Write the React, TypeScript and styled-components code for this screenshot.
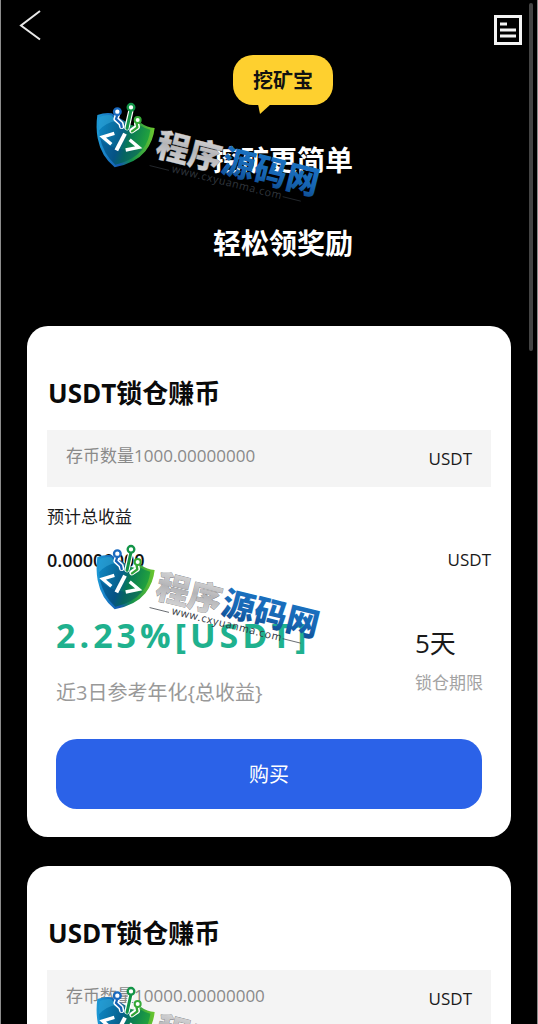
import React, { useId } from "react";
import styled, { createGlobalStyle } from "styled-components";

const GlobalStyle = createGlobalStyle`
  * { box-sizing: border-box; }
  body {
    margin: 0;
    background: #000;
    color: #1a1a1a;
    font-family: "Open Sans", "Noto Sans CJK SC", sans-serif;
    font-size: 17px;
    line-height: 24px;
  }
  h1, h2, p { margin: 0; }
  button, input { font: inherit; border: 0; padding: 0; background: none; }
  button { cursor: pointer; }
`;

const Screen = styled.div`
  position: relative;
  height: 100vh;
  overflow: hidden;
  background: #000;
  border: solid #8c8c8c;
  border-width: 0 1px;
`;

const Scroller = styled.div`
  height: 100%;
  overflow-y: auto;
  scrollbar-width: none;
`;

const ScrollThumb = styled.div`
  position: absolute;
  top: 3px;
  right: 4px;
  width: 4px;
  height: 34%;
  border-radius: 2px;
  background: #444;
`;

const Header = styled.header`
  display: flex;
  justify-content: space-between;
  height: 55px;
  padding: 10px 15px 0 18px;
`;

const IconButton = styled.button<{ $drop?: number }>`
  display: flex;
  align-items: flex-start;
  padding-top: ${(p) => p.$drop ?? 0}px;
`;

const Hero = styled.section`
  display: flex;
  flex-direction: column;
  align-items: center;
  padding: 0 0 63px 28px;
`;

const Bubble = styled.div`
  position: relative;
  padding: 1px 20px 0;
  margin-bottom: 35px;
  border-radius: 20px;
  background: #fed02f;
  color: #111;
  font-size: 20px;
  font-weight: 700;
  line-height: 49px;
`;

const BubbleTail = styled.svg`
  position: absolute;
  left: 24px;
  top: 49px;
`;

const Slogan = styled.h1`
  color: #fff;
  font-size: 28px;
  font-weight: 700;
  line-height: 40px;

  & + & { margin-top: 43px; }
`;

const CardList = styled.main`
  display: flex;
  flex-direction: column;
  gap: 29px;
  padding: 0 26px 29px;
`;

const Card = styled.form`
  display: flex;
  flex-direction: column;
  padding: 49px 20px 28px;
  border-radius: 21px;
  background: #fff;
`;

const CardTitle = styled.h2`
  padding-left: 1px;
  margin-bottom: 19px;
  color: #0a0a0a;
  font-size: 26px;
  font-weight: 700;
  line-height: 36px;
`;

const Field = styled.label`
  display: flex;
  align-items: flex-start;
  padding: 0 19px;
  margin-bottom: 18px;
  background: #f4f4f4;
  line-height: 57px;
`;

const AmountInput = styled.input`
  flex: 1;
  min-width: 0;
  height: 50px;
  line-height: 24px;
  outline: none;

  &::placeholder { color: #8a8a8a; opacity: 1; }
`;

const Row = styled.div`
  display: flex;
  justify-content: space-between;
  margin: 19px 0 41px;
`;

const Total = styled.strong`
  color: #111;
  font-size: 18px;
  font-weight: 600;
`;

const Stats = styled.div`
  display: flex;
  align-items: center;
  justify-content: space-between;
  padding: 0 8px 0 9px;
  margin-bottom: 32px;
`;

const Rate = styled.p`
  margin-bottom: 22px;
  color: #1fb18e;
  font-size: 34px;
  font-weight: 700;
  letter-spacing: 4px;
  line-height: 44px;
`;

const RateNote = styled.p`
  color: #999;
  font-size: 20px;
  line-height: 28px;
`;

const Days = styled.p`
  margin-bottom: 10px;
  font-size: 26px;
  line-height: 36px;
`;

const DaysNote = styled.p`
  color: #a3a3a3;
`;

const BuyButton = styled.button`
  height: 70px;
  margin: 0 9px;
  padding-top: 2px;
  border-radius: 21px;
  background: #2b62e8;
  color: #fff;
  font-size: 20px;
`;

const WatermarkLayer = styled.div`
  position: absolute;
  inset: 0;
  display: flex;
  flex-direction: column;
  gap: 332px;
  padding: 95px 0 0 84px;
  overflow: hidden;
  pointer-events: none;
`;

const WatermarkArt = styled.svg`
  flex: none;
  width: 240px;
  height: 110px;
`;

function Watermark() {
  const id = useId();
  const shield = `${id}s`;
  const rim = `${id}r`;
  const silver = `${id}g`;
  const blue = `${id}b`;
  return (
    <WatermarkArt viewBox="0 0 720 330" aria-hidden="true">
      <defs>
        <linearGradient id={shield} x1="0" y1="0.2" x2="1" y2="0.5">
          <stop offset="0" stopColor="#0d86c4" />
          <stop offset="0.45" stopColor="#07608c" />
          <stop offset="0.62" stopColor="#087a55" />
          <stop offset="1" stopColor="#25a83a" />
        </linearGradient>
        <linearGradient id={rim} x1="0" y1="0" x2="1" y2="0">
          <stop offset="0" stopColor="#1c9ad6" />
          <stop offset="0.4" stopColor="#1558b0" />
          <stop offset="0.6" stopColor="#14904c" />
          <stop offset="1" stopColor="#6cc72e" />
        </linearGradient>
        <linearGradient id={silver} x1="0" y1="0" x2="0" y2="1">
          <stop offset="0" stopColor="#e8e8e8" />
          <stop offset="0.5" stopColor="#b4b4b7" />
          <stop offset="1" stopColor="#dedede" />
        </linearGradient>
        <linearGradient id={blue} x1="0" y1="0" x2="0" y2="1">
          <stop offset="0" stopColor="#1b74c4" />
          <stop offset="0.6" stopColor="#1767b4" />
          <stop offset="1" stopColor="#0c4385" />
        </linearGradient>
      </defs>

      <path
        d="M37 60Q60 52 80 55L129 84Q148 101 168 84Q186 98 209 99Q205 138 181 169Q152 205 89 217Q48 184 38 130Q32 96 37 60Z"
        fill={`url(#${rim})`}
      />
      <path
        d="M43 66Q62 58 79 61L126 92Q150 108 169 93Q182 102 196 104Q192 138 173 163Q143 198 91 209Q55 176 45 128Q39 98 43 66Z"
        fill={`url(#${shield})`}
      />
      <path d="M43 66Q62 58 79 61L94 78Q64 82 42 106Q40 84 43 66Z" fill="#38aee0" opacity="0.5" />
      <path d="M91 209Q55 176 45 128Q80 174 173 163Q143 198 91 209Z" fill="#023c78" opacity="0.35" />

      <g fill="none" strokeLinecap="round" strokeLinejoin="round">
        <g stroke="#fff" strokeWidth="16">
          <path d="M97 60L93 72L108 86L110 94" />
          <path d="M137 50L126 98" />
          <path d="M155 86L157 96L141 107" />
        </g>
        <path d="M97 60L93 72L108 86L110 96" stroke="#1762b4" strokeWidth="7" />
        <path d="M137 50L126 100" stroke="#129447" strokeWidth="9" />
        <path d="M155 86L157 97L141 109" stroke="#30a436" strokeWidth="7" />
        <circle cx="97" cy="50" r="10" fill="#fff" stroke="#1a6abf" strokeWidth="7" />
        <circle cx="138" cy="37" r="10" fill="#fff" stroke="#129447" strokeWidth="7" />
        <circle cx="158" cy="75" r="9" fill="#fff" stroke="#35a936" strokeWidth="6" />
      </g>
      <g fill="none" stroke="#fff" strokeWidth="10">
        <path d="M88 115L53 126L79 148" />
        <path d="M120 116L94 166" strokeWidth="12" />
        <path d="M134 134L161 157L122 165" />
      </g>

      <g
        transform="translate(208 181) rotate(14)"
        fontFamily="'Noto Sans CJK SC', sans-serif"
        fontSize="99"
        fontWeight="900"
      >
        <text fill={`url(#${silver})`} stroke="#77777a" strokeWidth="2" paintOrder="stroke">
          程序
        </text>
        <text x="202" fill={`url(#${blue})`}>
          源码网
        </text>
      </g>
      <g transform="translate(259 231) rotate(14)">
        <text
          fill="#30363d"
          fontFamily="'Open Sans', sans-serif"
          fontSize="32"
          fontWeight="500"
          letterSpacing="2"
        >
          www.cxyuanma.com
        </text>
        <path d="M-68 -3H-8M342 -9H398" stroke="#30363d" strokeWidth="2" />
      </g>
    </WatermarkArt>
  );
}

function LockCard({ amount }: { amount: string }) {
  return (
    <Card onSubmit={(e: React.FormEvent) => e.preventDefault()}>
      <CardTitle>USDT锁仓赚币</CardTitle>
      <Field>
        <AmountInput type="text" inputMode="decimal" placeholder={`存币数量${amount}`} />
        <span>USDT</span>
      </Field>
      <p>预计总收益</p>
      <Row>
        <Total>0.00000000</Total>
        <span>USDT</span>
      </Row>
      <Stats>
        <div>
          <Rate>2.23%[USDT]</Rate>
          <RateNote>近3日参考年化{"{总收益}"}</RateNote>
        </div>
        <div>
          <Days>5天</Days>
          <DaysNote>锁仓期限</DaysNote>
        </div>
      </Stats>
      <BuyButton type="submit">购买</BuyButton>
    </Card>
  );
}

export default function App() {
  return (
    <Screen>
      <GlobalStyle />
      <Scroller>
        <Header>
          <IconButton type="button" aria-label="返回">
            <svg width="22" height="31" viewBox="0 0 22 31" fill="none" stroke="#e8e8e8" strokeWidth="2">
              <path d="M21 1L2 15.500L21 29.500" />
            </svg>
          </IconButton>
          <IconButton type="button" aria-label="记录" $drop={4}>
            <svg width="28" height="32" viewBox="0 0 28 32" fill="none" stroke="#f4f4f4" strokeWidth="3">
              <path d="M1.500 2.500H26.500V29.500H1.500Z" />
              <path d="M6 10H13M6 16H22M6 22H22" />
            </svg>
          </IconButton>
        </Header>
        <Hero>
          <Bubble>
            挖矿宝
            <BubbleTail width="15" height="11" viewBox="0 0 15 11" fill="#fed02f" aria-hidden="true">
              <path d="M1 0H14L3 10Z" />
            </BubbleTail>
          </Bubble>
          <Slogan>挖矿更简单</Slogan>
          <Slogan>轻松领奖励</Slogan>
        </Hero>
        <CardList>
          <LockCard amount="1000.00000000" />
          <LockCard amount="10000.00000000" />
        </CardList>
      </Scroller>
      <ScrollThumb />
      <WatermarkLayer>
        <Watermark />
        <Watermark />
        <Watermark />
      </WatermarkLayer>
    </Screen>
  );
}
